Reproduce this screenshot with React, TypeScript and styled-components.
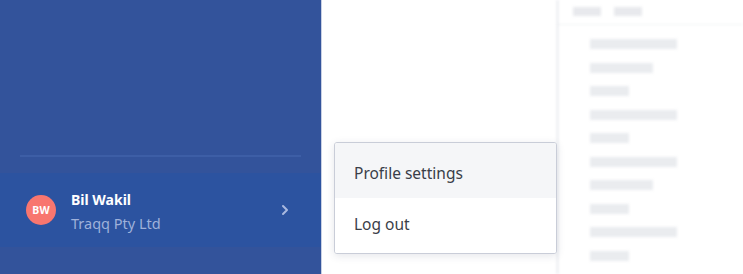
import React from 'react';
import styled, { createGlobalStyle } from 'styled-components';

const GlobalStyle = createGlobalStyle`
  html, body {
    margin: 0;
    padding: 0;
    background: #ffffff;
  }
  body {
    font-family: 'Noto Sans', 'Open Sans', sans-serif;
  }
`;

const Layout = styled.div`
  display: flex;
  width: 743px;
  height: 274px;
  overflow: hidden;
`;

const Sidebar = styled.aside`
  width: 322px;
  flex-shrink: 0;
  display: flex;
  flex-direction: column;
  justify-content: flex-end;
  background: #33539b;
  border-right: 1px solid #c8d0e4;
  padding-bottom: 27px;
  box-sizing: border-box;
`;

const Divider = styled.div`
  height: 2px;
  margin: 0 20px 16px 20px;
  background: #3d5ea6;
`;

const UserBlock = styled.div`
  height: 74px;
  display: flex;
  align-items: center;
  padding: 2px 26px 0 26px;
  box-sizing: border-box;
  gap: 15px;
  background: #2c53a0;
`;

const Avatar = styled.div`
  width: 30px;
  height: 30px;
  margin-top: -2px;
  border-radius: 50%;
  background: #f8766f;
  color: #ffffff;
  font-size: 10.5px;
  font-weight: 700;
  display: flex;
  align-items: center;
  justify-content: center;
  letter-spacing: 0.2px;
`;

const UserText = styled.div`
  flex: 1;
  display: flex;
  flex-direction: column;
  gap: 3px;
`;

const UserName = styled.div`
  color: #ffffff;
  font-size: 14px;
  font-weight: 700;
  line-height: 20px;
`;

const Company = styled.div`
  color: #9fb1da;
  font-size: 14.5px;
  line-height: 20px;
`;

const Chevron = styled.svg`
  width: 10px;
  height: 12px;
  margin-right: 5px;
  margin-top: -2px;
`;

const Main = styled.main`
  flex: 1;
  position: relative;
  background: #ffffff;
`;

const Dropdown = styled.div`
  position: absolute;
  top: 142px;
  left: 12px;
  width: 221px;
  background: #ffffff;
  border: 1px solid #c9cdd8;
  border-radius: 3px;
  box-shadow: 0 2px 8px rgba(40, 50, 80, 0.12);
  overflow: hidden;
  z-index: 5;
`;

const MenuItem = styled.div<{ active?: boolean }>`
  height: 55px;
  display: flex;
  align-items: center;
  padding: 0 19px;
  box-sizing: border-box;
  font-size: 15.5px;
  color: #3a3e48;
  background: ${props => (props.active ? '#f5f6f8' : '#ffffff')};

  &:first-child {
    padding-top: 4px;
  }
  &:last-child {
    padding-bottom: 3px;
  }
`;

const RightPanel = styled.section`
  width: 186px;
  flex-shrink: 0;
  border-left: 1px solid #d5d8e0;
  box-sizing: border-box;
  filter: blur(1.5px);
`;

const PanelHeader = styled.div`
  height: 25px;
  display: flex;
  gap: 13px;
  padding: 7px 0 0 15px;
  box-sizing: border-box;
  border-bottom: 1px solid #f0f1f3;
`;

const HeaderBar = styled.div`
  width: 28px;
  height: 9px;
  background: #e8e9ed;
`;

const List = styled.div`
  display: flex;
  flex-direction: column;
  gap: 13.5px;
  padding: 14px 0 0 32px;
`;

const SkeletonBar = styled.div<{ w: number }>`
  width: ${props => props.w}px;
  height: 10px;
  background: #eaecef;
`;

const rows = [87, 63, 39, 87, 39, 87, 63, 39, 87, 39];

export default function App() {
  return (
    <>
      <GlobalStyle />
      <Layout>
        <Sidebar>
          <Divider />
          <UserBlock>
            <Avatar>BW</Avatar>
            <UserText>
              <UserName>Bil Wakil</UserName>
              <Company>Traqq Pty Ltd</Company>
            </UserText>
            <Chevron viewBox="0 0 10 12">
              <path d="M3 2 L7 6 L3 10" fill="none" stroke="#a9b9e0" strokeWidth="2" strokeLinecap="round" strokeLinejoin="round" />
            </Chevron>
          </UserBlock>
        </Sidebar>
        <Main>
          <Dropdown>
            <MenuItem active>Profile settings</MenuItem>
            <MenuItem>Log out</MenuItem>
          </Dropdown>
        </Main>
        <RightPanel>
          <PanelHeader>
            <HeaderBar />
            <HeaderBar />
          </PanelHeader>
          <List>
            {rows.map((w, i) => (
              <SkeletonBar key={i} w={w} />
            ))}
          </List>
        </RightPanel>
      </Layout>
    </>
  );
}
